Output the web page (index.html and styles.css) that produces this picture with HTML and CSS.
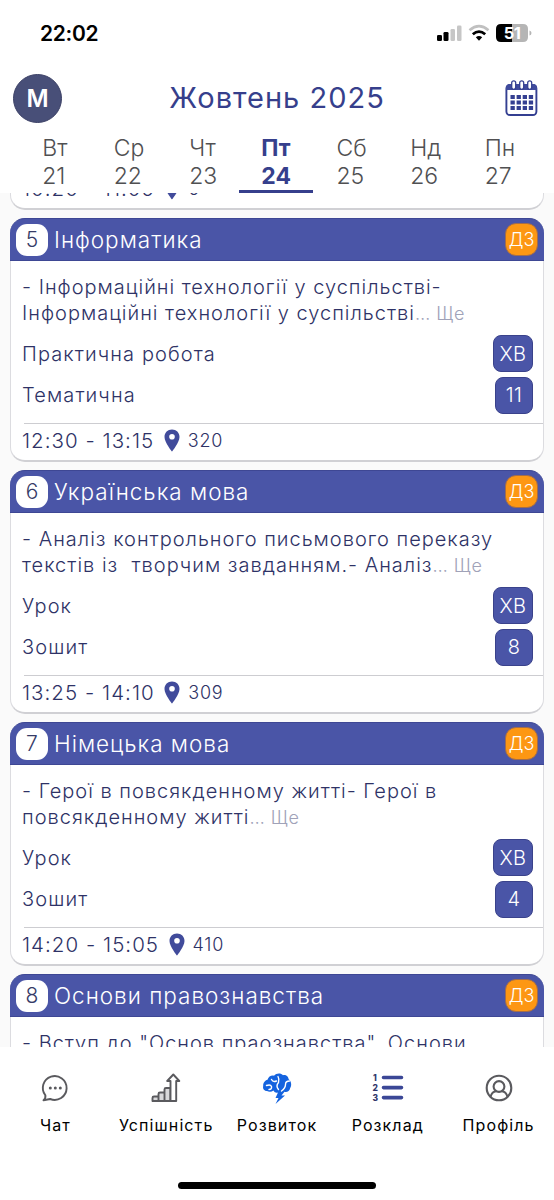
FILE: index.html
```html
<!DOCTYPE html>
<html lang="uk">
<head>
<meta charset="utf-8">
<title>Розклад</title>
<link rel="stylesheet" href="styles.css">
</head>
<body>
<svg class="defs" width="0" height="0">
  <symbol id="pin" viewBox="0 0 16 23"><path fill-rule="evenodd" d="M8 0.500C3.700 0.500 0.500 3.700 0.500 7.900C0.500 13.300 8 22.500 8 22.500S15.500 13.300 15.500 7.900C15.500 3.700 12.300 0.500 8 0.500ZM8 5A2.800 2.800 0 1 1 8 10.600A2.800 2.800 0 1 1 8 5Z"/></symbol>
</svg>
<div class="screen">
  <header class="top">
    <div class="status">
      <span class="clock">22:02</span>
      <svg class="status-icons" width="96" height="20" viewBox="0 0 96 20">
        <rect x="0" y="11" width="5" height="6" rx="1.300"/>
        <rect x="6.500" y="8" width="5" height="9" rx="1.300"/>
        <rect x="13.500" y="5" width="4.500" height="12" rx="1.300" fill="#c6c6c6"/>
        <rect x="20" y="1.500" width="4.500" height="15.500" rx="1.300" fill="#c6c6c6"/>
        <path d="M32.500 6.200Q42 -1.800 51.500 6.200" fill="none" stroke="#c0c0c0" stroke-width="2.600"/>
        <path d="M35.800 10.200Q42 5 48.200 10.200" fill="none" stroke="#000" stroke-width="2.800"/>
        <path d="M38.800 13.300Q42 10.800 45.200 13.300L42 16.700Z"/>
        <path d="M64 0H75V18H64Q59 18 59 13V5Q59 0 64 0Z"/>
        <path d="M75 0H86Q91 0 91 5V13Q91 18 86 18H75Z" fill="#b5b5b5"/>
        <path d="M92.500 6.500Q94.500 7 94.500 9T92.500 11.500Z" fill="#b5b5b5"/>
        <text class="battery" x="75" y="14.800" text-anchor="middle">51</text>
      </svg>
    </div>
    <div class="titlebar">
      <div class="avatar">М</div>
      <h1 class="month">Жовтень 2025</h1>
      <svg class="calendar" width="33" height="37" viewBox="0 0 33 37">
        <rect x="1.400" y="5" width="30" height="30" rx="3.500" fill="#fff" stroke="#343f91" stroke-width="1.900"/>
        <path d="M1 10V8Q1 4 5 4H28Q32 4 32 8V10Z" fill="#3f4a9d"/>
        <g fill="#fff" stroke="#343f91" stroke-width="1.300"><rect x="6.700" y="0.800" width="4" height="8.500" rx="2"/><rect x="14.700" y="0.800" width="4" height="8.500" rx="2"/><rect x="22.700" y="0.800" width="4" height="8.500" rx="2"/></g>
        <path d="M5.500 17H28.500M5.500 22.500H28.500M5.500 28H28.500" fill="none" stroke="#343f91" stroke-width="4.200" stroke-dasharray="4.300 1.800"/>
      </svg>
    </div>
    <nav class="days">
      <div class="day"><span>Вт<br>21</span></div>
      <div class="day"><span>Ср<br>22</span></div>
      <div class="day"><span>Чт<br>23</span></div>
      <div class="day active"><span>Пт<br>24</span></div>
      <div class="day"><span>Сб<br>25</span></div>
      <div class="day"><span>Нд<br>26</span></div>
      <div class="day"><span>Пн<br>27</span></div>
    </nav>
  </header>

  <main class="lessons">
    <article class="card card-previous">
      <footer class="when"><span>10:20 - 11:05</span><svg class="pin"><use href="#pin"/></svg><span class="room">6</span></footer>
    </article>

    <article class="card">
      <h2 class="head"><span class="num">5</span><span class="subject">Інформатика</span><span class="hw">ДЗ</span></h2>
      <p class="topic">- Інформаційні технології у суспільстві-<br>Інформаційні технології у суспільстві<span class="more">… Ще</span></p>
      <div class="row"><span>Практична робота</span><b class="mark wide">ХВ</b></div>
      <div class="row"><span>Тематична</span><b class="mark">11</b></div>
      <footer class="when"><span>12:30 - 13:15</span><svg class="pin"><use href="#pin"/></svg><span class="room">320</span></footer>
    </article>

    <article class="card">
      <h2 class="head"><span class="num">6</span><span class="subject">Українська мова</span><span class="hw">ДЗ</span></h2>
      <p class="topic">- Аналіз контрольного письмового переказу<br>текстів із&nbsp; творчим завданням.- Аналіз<span class="more">… Ще</span></p>
      <div class="row"><span>Урок</span><b class="mark wide">ХВ</b></div>
      <div class="row"><span>Зошит</span><b class="mark">8</b></div>
      <footer class="when"><span>13:25 - 14:10</span><svg class="pin"><use href="#pin"/></svg><span class="room">309</span></footer>
    </article>

    <article class="card">
      <h2 class="head"><span class="num">7</span><span class="subject">Німецька мова</span><span class="hw">ДЗ</span></h2>
      <p class="topic">- Герої в повсякденному житті- Герої в<br>повсякденному житті<span class="more">… Ще</span></p>
      <div class="row"><span>Урок</span><b class="mark wide">ХВ</b></div>
      <div class="row"><span>Зошит</span><b class="mark">4</b></div>
      <footer class="when"><span>14:20 - 15:05</span><svg class="pin"><use href="#pin"/></svg><span class="room">410</span></footer>
    </article>

    <article class="card">
      <h2 class="head"><span class="num">8</span><span class="subject">Основи правознавства</span><span class="hw">ДЗ</span></h2>
      <p class="topic">- Вступ до "Основ праознавства". Основи</p>
    </article>
  </main>

  <nav class="tabs">
    <div class="tab">
      <svg class="tab-icon" viewBox="0 0 32 32" fill="none" stroke="#5a5a5e" stroke-width="1.900"><path d="M6.400 23.400A11.900 11.900 0 1 1 11.200 27L4.500 28.300Q6.800 26.500 6.400 23.400Z" stroke-linejoin="round"/><g fill="#5a5a5e" stroke="none"><circle cx="11.300" cy="16" r="1.500"/><circle cx="16.300" cy="16" r="1.500"/><circle cx="21.300" cy="16" r="1.500"/></g></svg>
      <span>Чат</span>
    </div>
    <div class="tab">
      <svg class="tab-icon" viewBox="0 0 32 32" fill="#d8d8da" stroke="#5a5a5e" stroke-width="1.900" stroke-linejoin="round"><path d="M2.500 29V26Q2.500 24.500 4 24.500H8.500V29ZM8.500 29V22Q8.500 20.500 10 20.500H14.500V29ZM14.500 29V17.500Q14.500 16 16 16H20.500V29Z"/><path fill="#fff" d="M20.500 29V9H17.200L23.300 2.500L29.300 9H26.200V29ZM2 29H26.500"/></svg>
      <span>Успішність</span>
    </div>
    <div class="tab">
      <svg class="tab-icon" viewBox="0 0 32 32"><path fill="#1463df" d="M6 19C3 19 1.500 16.500 2.200 14C2 11 4 8.300 6.500 7.800C7.500 4.500 10.500 3 13 3.800C15.500 0.700 20 0.900 22 3.200C25 2.500 27.700 5 27.600 7.300C30.300 9 31 13.500 29.200 16C28.700 19 26 20.500 23.500 19.800L20.500 23.500H24L14.500 32L17.500 26H14.500L17 20.500C15 21 13.500 20.500 12.500 18.500C10.500 20 8 20 6 19Z"/><g fill="none" stroke="#fff" stroke-width="1.400" stroke-linecap="round"><path d="M5.500 13.500Q9.500 12 10.500 14.500Q11 17.500 8 17.500M10.500 7.500Q12 10.500 15.500 9M17 4.500Q18.500 7 17.500 10.500Q14.500 14 17.500 17.500M28.500 9Q24.500 9 24.500 12.500T20.500 19"/></g></svg>
      <span>Розвиток</span>
    </div>
    <div class="tab">
      <svg class="tab-icon" viewBox="0 0 32 32"><path d="M11.500 5.500H29.500M11.500 15.600H29.500M11.500 25.600H29.500" stroke="#3b4796" stroke-width="3.600" stroke-linecap="round"/><g class="digits"><text x="1" y="8.500">1</text><text x="0.500" y="18.500">2</text><text x="0.500" y="28.500">3</text></g></svg>
      <span>Розклад</span>
    </div>
    <div class="tab">
      <svg class="tab-icon" viewBox="0 0 32 32" fill="none" stroke="#5a5a5e" stroke-width="2.100"><circle cx="16" cy="16" r="12.300"/><circle cx="16" cy="14.500" r="5.400"/><path d="M7.500 24.700Q9 19.800 13 19.300M24.500 24.700Q23 19.800 19 19.300"/></svg>
      <span>Профіль</span>
    </div>
  </nav>
  <div class="home"></div>
</div>
</body>
</html>
```

FILE: styles.css
```css
* { box-sizing: border-box; }
body { margin: 0; background: #fff; font-family: Inter, "Noto Sans", sans-serif; color: #2e3266; }
.defs { display: block; }
.screen { width: 554px; height: 1200px; display: flex; flex-direction: column; overflow: hidden; }

.top { height: 193px; flex: none; background: #fff; }
.status { height: 68px; padding: 0 21px 0 40px; display: flex; justify-content: space-between; align-items: center; }
.clock { margin-top: -1px; font-size: 21px; font-weight: 600; color: #000; letter-spacing: -0.3px; }
.status-icons { margin-top: 0; }
.battery { font-size: 16.5px; font-weight: 700; fill: #fff; letter-spacing: -0.5px; }
.titlebar { height: 60px; padding: 0 16px 0 13px; display: flex; align-items: center; justify-content: space-between; }
.avatar { width: 49px; height: 49px; border-radius: 50%; background: #484f78; border: 1px solid #3c4166; color: #fff; font-size: 24px; font-weight: 600; display: flex; align-items: center; justify-content: center; }
.month { margin: -2px 13px 0 0; font-size: 29px; font-weight: 400; color: #363f8c; letter-spacing: 1px; white-space: nowrap; }
.days { display: grid; grid-template-columns: repeat(7, 74.2px); margin-left: 16.5px; height: 65px; padding-top: 6px; }
.day { display: flex; flex-direction: column; align-items: center; height: 59px; padding-left: 2.5px; font-size: 23px; line-height: 28px; font-weight: 300; color: #505052; }
.day.active { padding-left: 0; font-weight: 700; color: #363f8c; border-bottom: 3px solid #363f8c; }

.lessons { flex: none; height: 854px; overflow: hidden; background: #fafafa; padding: 0 10px; display: flex; flex-direction: column; gap: 8px; }
.card { flex: none; height: 244px; background: #fff; border: 1px solid #dcdce0; border-bottom: 2px solid #d0d0d4; border-radius: 15px; display: flex; flex-direction: column; }
.card-previous { margin-top: -227px; justify-content: flex-end; }
.head { margin: -1px -1px 0; height: 43px; flex: none; padding: 0 6px; display: flex; align-items: center; background: #4a55a7; border: solid #3e4794; border-width: 1px 0; border-radius: 15px 15px 0 0; color: #fff; font-weight: 400; }
.num { width: 32px; height: 32px; border-radius: 11px; background: #fff; color: #363b67; font-size: 21px; font-weight: 300; display: flex; align-items: center; justify-content: center; }
.subject { margin-left: 6px; font-size: 22.5px; font-weight: 300; letter-spacing: 1px; white-space: nowrap; }
.hw { margin-left: auto; width: 33px; height: 33px; border-radius: 11px; background: #fd9713; border: 1px solid #a36d4b; color: #fff; font-size: 18px; font-weight: 300; display: flex; align-items: center; justify-content: center; }
.topic { margin: 0; padding: 13px 0 6px 11px; flex: none; font-size: 20px; line-height: 26px; font-weight: 300; letter-spacing: 1px; white-space: nowrap; }
.more { font-size: 18px; letter-spacing: 0.5px; color: #a0a2b8; }
.row { height: 41.5px; flex: none; padding: 0 10px 0 11px; display: flex; align-items: center; justify-content: space-between; font-size: 20px; font-weight: 300; letter-spacing: 1.1px; }
.mark { width: 38px; height: 37px; border-radius: 8px; background: #4a55a7; border: 1px solid #3a428b; color: #fff; font-size: 20px; font-weight: 300; letter-spacing: 0.3px; display: flex; align-items: center; justify-content: center; }
.mark.wide { width: 40px; }
.when { height: 37px; flex: none; margin: auto 0 0 13px; border-top: 1px solid #cdcdd1; padding-bottom: 4px; display: flex; align-items: center; font-size: 20.5px; font-weight: 300; letter-spacing: 1.03px; white-space: nowrap; }
.when > span:first-child { margin-left: -2px; }
.pin { width: 16px; height: 23px; margin: 0 8px 0 9.5px; fill: #414b9b; }
.room { font-size: 18px; letter-spacing: 0.8px; }

.tabs { flex: none; height: 131px; display: grid; grid-template-columns: repeat(5, 110.8px); padding: 25px 0 0; background: #fff; }
.tab { display: flex; flex-direction: column; align-items: center; font-size: 16px; font-weight: 400; letter-spacing: 1.1px; color: #000; white-space: nowrap; }
.tab span { margin-top: 11px; line-height: 20px; }
.tab-icon { width: 32px; height: 32px; overflow: visible; }
.digits { font-size: 8.5px; font-weight: 800; letter-spacing: 0; fill: #30366a; }
.home { flex: none; width: 198px; height: 7px; margin: 4px 0 0 178px; border-radius: 4px; background: #000; }
```
